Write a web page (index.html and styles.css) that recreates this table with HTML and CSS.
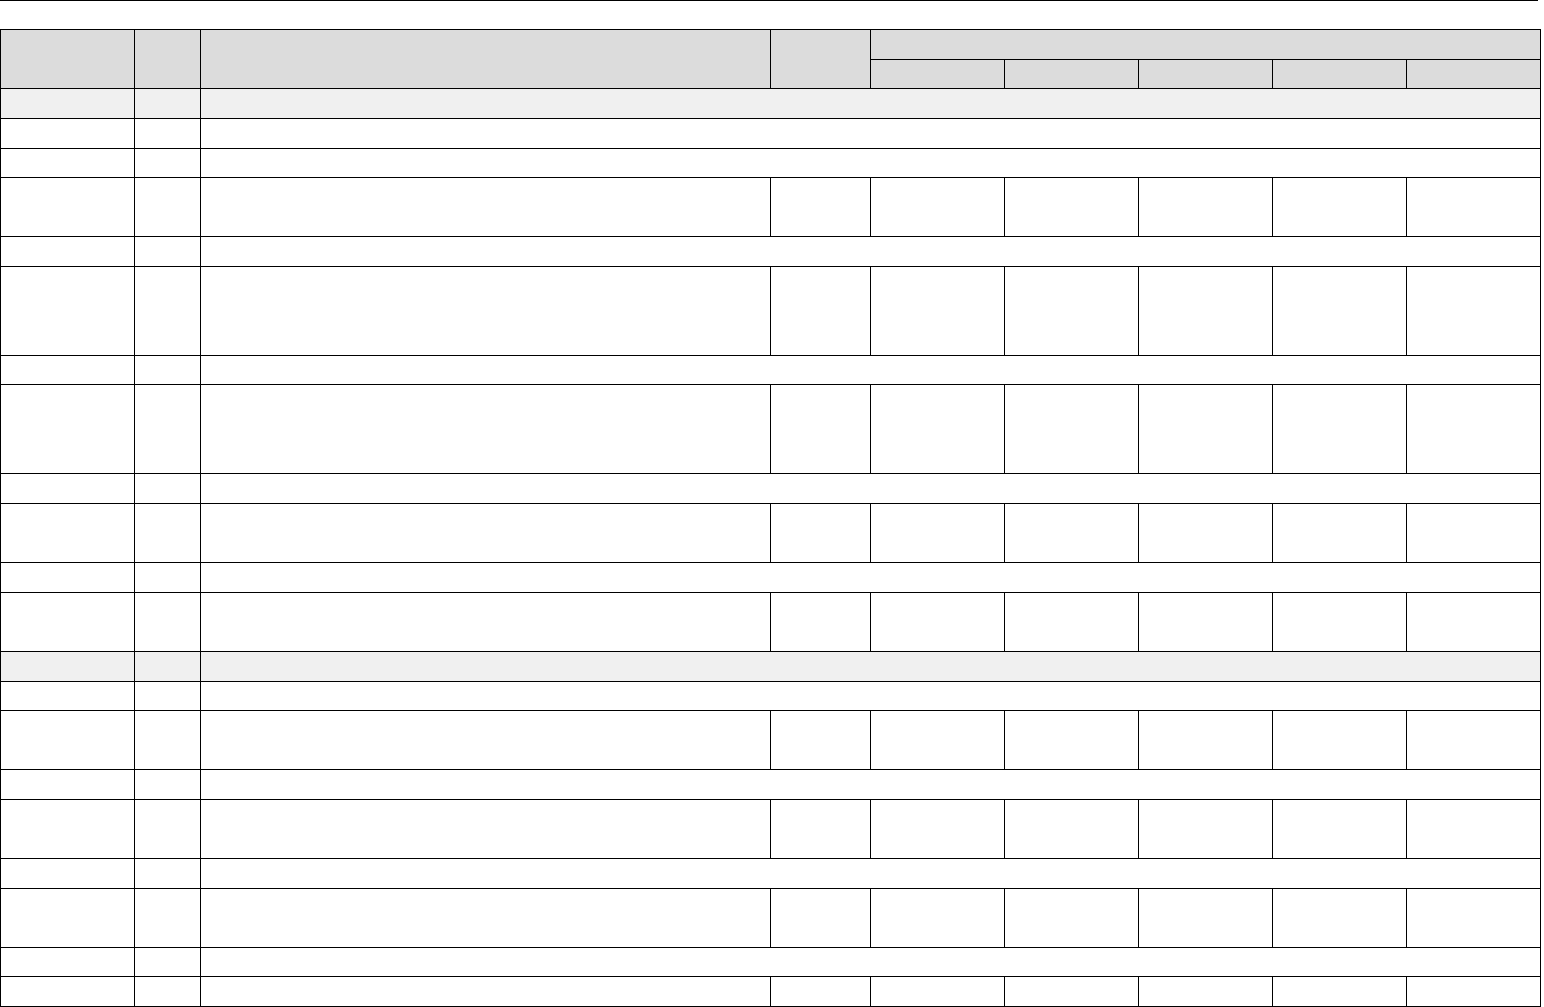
FILE: index.html
```html
<!DOCTYPE html>
<html lang="en">
<head>
<meta charset="utf-8">
<title>Table</title>
<link rel="stylesheet" href="styles.css">
</head>
<body>
<div class="topline"></div>
<table class="grid">
  <colgroup>
    <col class="c1"><col class="c2"><col class="c3"><col class="c4">
    <col class="c5"><col class="c5"><col class="c5"><col class="c5"><col class="c5">
  </colgroup>
  <thead>
    <tr class="h30"><th rowspan="2"></th><th rowspan="2"></th><th rowspan="2"></th><th rowspan="2"></th><th colspan="5"></th></tr>
    <tr class="h29"><th></th><th></th><th></th><th></th><th></th></tr>
  </thead>
  <tbody>
    <tr class="h30 section"><td></td><td></td><td colspan="7"></td></tr>
    <tr class="h30"><td></td><td></td><td colspan="7"></td></tr>
    <tr class="h29"><td></td><td></td><td colspan="7"></td></tr>
    <tr class="h59"><td></td><td></td><td></td><td></td><td></td><td></td><td></td><td></td><td></td></tr>
    <tr class="h30"><td></td><td></td><td colspan="7"></td></tr>
    <tr class="h89"><td></td><td></td><td></td><td></td><td></td><td></td><td></td><td></td><td></td></tr>
    <tr class="h29"><td></td><td></td><td colspan="7"></td></tr>
    <tr class="h89"><td></td><td></td><td></td><td></td><td></td><td></td><td></td><td></td><td></td></tr>
    <tr class="h30"><td></td><td></td><td colspan="7"></td></tr>
    <tr class="h59"><td></td><td></td><td></td><td></td><td></td><td></td><td></td><td></td><td></td></tr>
    <tr class="h30"><td></td><td></td><td colspan="7"></td></tr>
    <tr class="h59"><td></td><td></td><td></td><td></td><td></td><td></td><td></td><td></td><td></td></tr>
    <tr class="h30 section"><td></td><td></td><td colspan="7"></td></tr>
    <tr class="h29"><td></td><td></td><td colspan="7"></td></tr>
    <tr class="h59"><td></td><td></td><td></td><td></td><td></td><td></td><td></td><td></td><td></td></tr>
    <tr class="h30"><td></td><td></td><td colspan="7"></td></tr>
    <tr class="h59"><td></td><td></td><td></td><td></td><td></td><td></td><td></td><td></td><td></td></tr>
    <tr class="h30"><td></td><td></td><td colspan="7"></td></tr>
    <tr class="h59"><td></td><td></td><td></td><td></td><td></td><td></td><td></td><td></td><td></td></tr>
    <tr class="h29"><td></td><td></td><td colspan="7"></td></tr>
    <tr class="h30"><td></td><td></td><td></td><td></td><td></td><td></td><td></td><td></td><td></td></tr>
  </tbody>
</table>
</body>
</html>
```
FILE: styles.css
```css
html, body {
  margin: 0;
  padding: 0;
  background: #ffffff;
  font-family: "Liberation Sans", Arial, sans-serif;
  font-size: 13px;
}
.topline {
  width: 1538px;
  height: 28px;
  border-top: 1px solid #000;
}
.grid {
  border-collapse: collapse;
  table-layout: fixed;
  width: 1541px;
}
.grid th, .grid td {
  border: 1px solid #000;
  padding: 0;
}
.grid th {
  background: #dcdcdc;
}
.grid .section td {
  background: #f0f0f0;
}
.c1 { width: 134px; }
.c2 { width: 66px; }
.c3 { width: 570px; }
.c4 { width: 100px; }
.c5 { width: 134px; }
.h29 { height: 29px; }
.h30 { height: 30px; }
.h59 { height: 59px; }
.h89 { height: 89px; }
```
